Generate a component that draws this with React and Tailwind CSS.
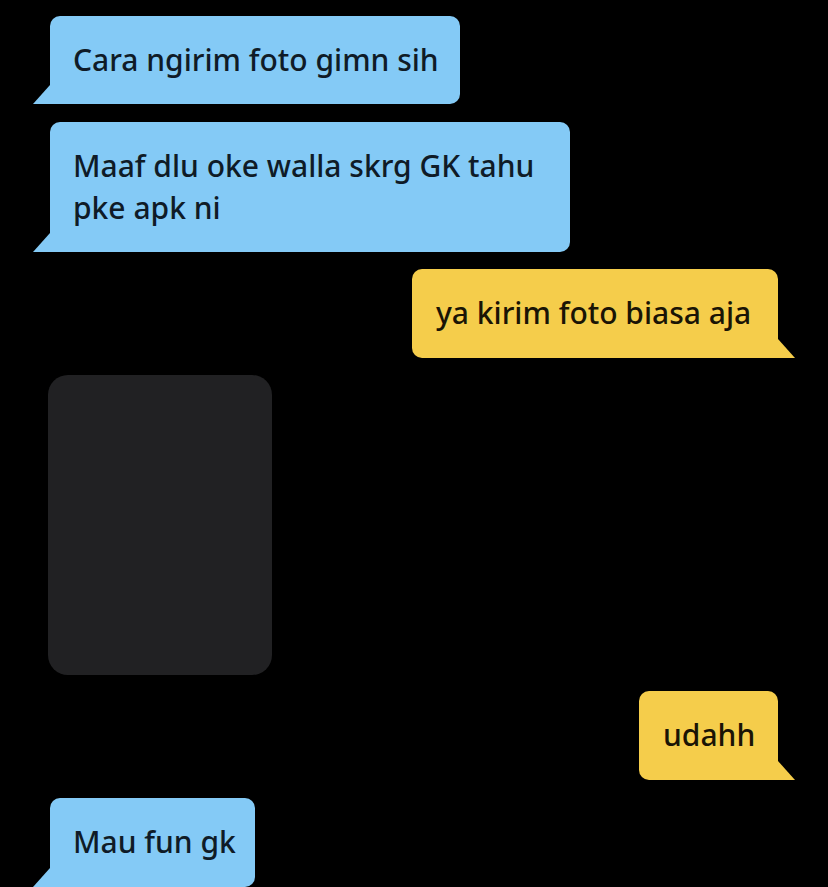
export default function App() {
  const font = { fontFamily: '"Noto Sans", "Open Sans", sans-serif' };
  const Left = ({ w, pb, children }) => (
    <div className="relative self-start ml-[50px]">
      <div className={`relative bg-[#84caf6] text-[#0f1b27] rounded-[10px] rounded-bl-none pl-[23px] pr-[18px] pt-[23px] text-[30px] leading-[42px] font-medium ${pb} ${w}`}>
        {children}
      </div>
      <svg className="absolute left-[-17px] bottom-0" width="18" height="19" viewBox="0 0 18 19">
        <polygon points="17,0 18,0 18,19 0,19" fill="#84caf6" />
      </svg>
    </div>
  );
  const Right = ({ w, children }) => (
    <div className="relative self-end mr-[50px]">
      <div className={`relative bg-[#f5cd4b] text-[#1a1405] rounded-[10px] rounded-br-none pl-[24px] pr-[18px] pt-[23px] pb-[24px] text-[30px] leading-[42px] font-medium ${w}`}>
        {children}
      </div>
      <svg className="absolute right-[-17px] bottom-0" width="18" height="19" viewBox="0 0 18 19">
        <polygon points="0,0 1,0 18,19 0,19" fill="#f5cd4b" />
      </svg>
    </div>
  );
  return (
    <div className="w-[828px] h-[887px] bg-black overflow-hidden" style={font}>
      <div className="flex flex-col pt-[16px]">
        <Left w="w-[410px]" pb="pb-[23px]">Cara ngirim foto gimn sih</Left>
        <div className="h-[18px]" />
        <Left w="w-[520px]" pb="pb-[23px]">Maaf dlu oke walla skrg GK tahu pke apk ni</Left>
        <div className="h-[17px]" />
        <Right w="w-[366px]">ya kirim foto biasa aja</Right>
        <div className="h-[17px]" />
        <div className="ml-[48px] w-[224px] h-[300px] rounded-[20px] bg-[#212123]" />
        <div className="h-[16px]" />
        <Right w="w-[139px]">udahh</Right>
        <div className="h-[18px]" />
        <Left w="w-[205px]" pb="pb-[24px]">Mau fun gk</Left>
      </div>
    </div>
  );
}
